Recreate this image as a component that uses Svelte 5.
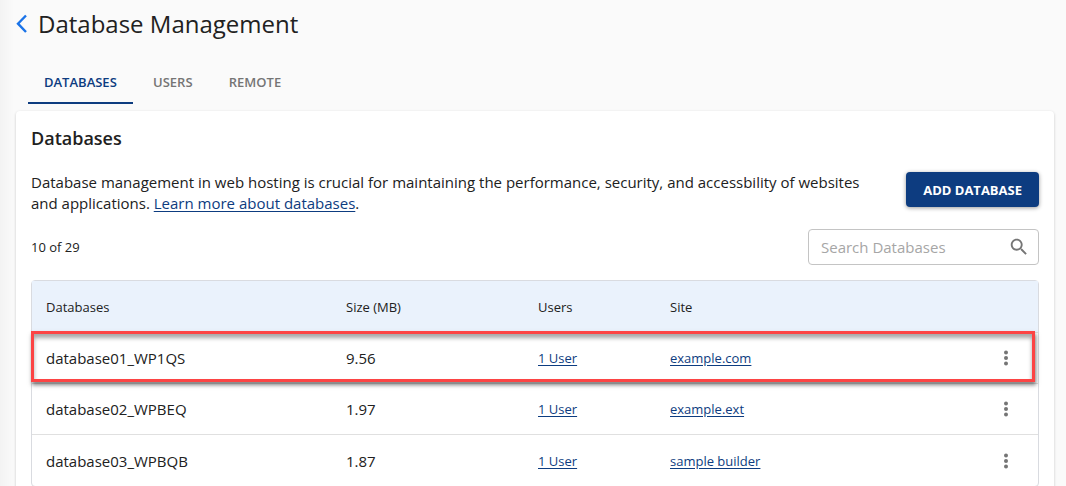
<script lang="ts">
    const tabs = ["Databases", "Users", "Remote"];
    let activeTab = $state("Databases");
    let search = $state("");

    const total = 29;
    const pageSize = 10;

    const databases = [
        { name: "database01_WP1QS", size: "9.56", users: "1 User", site: "example.com" },
        { name: "database02_WPBEQ", size: "1.97", users: "1 User", site: "example.ext" },
        { name: "database03_WPBQB", size: "1.87", users: "1 User", site: "sample builder" },
    ];
    const highlighted = "database01_WP1QS";

    const rows = $derived(
        databases.filter((db) => db.name.toLowerCase().includes(search.toLowerCase()))
    );
</script>

<div class="page">
    <header>
        <a class="back" href="#back" aria-label="Back">
            <svg width="12" height="20" viewBox="0 0 12 20">
                <path d="M10 1.5 L2 9.7 L10 18" fill="none" stroke="currentColor" stroke-width="2.4" />
            </svg>
        </a>
        <h1>Database Management</h1>
    </header>

    <div class="tabs" role="tablist">
        {#each tabs as tab}
            <button
                role="tab"
                class:active={activeTab === tab}
                aria-selected={activeTab === tab}
                onclick={() => (activeTab = tab)}
            >{tab}</button>
        {/each}
    </div>

    <main>
        <h2>Databases</h2>

        <div class="intro">
            <p>
                Database management in web hosting is crucial for maintaining the performance, security, and accessbility of websites and applications. <a href="#learn">Learn more about databases</a>.
            </p>
            <button class="add">Add Database</button>
        </div>

        <div class="toolbar">
            <span class="count">{pageSize} of {total}</span>
            <label class="search">
                <input type="text" placeholder="Search Databases" aria-label="Search Databases" bind:value={search} />
                <svg width="22" height="22" viewBox="0 0 24 24" fill="currentColor">
                    <path d="M15.5 14h-.79l-.28-.27C15.41 12.59 16 11.11 16 9.5 16 5.91 13.09 3 9.5 3S3 5.91 3 9.5 5.91 16 9.5 16c1.61 0 3.09-.59 4.23-1.57l.27.28v.79l5 4.99L20.49 19l-4.99-5zm-6 0C7.01 14 5 11.99 5 9.5S7.01 5 9.5 5 14 7.01 14 9.5 11.99 14 9.5 14z" />
                </svg>
            </label>
        </div>

        <div class="table-wrap">
            <table>
                <thead>
                    <tr>
                        <th class="name">Databases</th>
                        <th class="size">Size (MB)</th>
                        <th class="users">Users</th>
                        <th>Site</th>
                        <th class="actions" aria-label="Actions"></th>
                    </tr>
                </thead>
                <tbody>
                    {#each rows as db (db.name)}
                        <tr class:highlight={db.name === highlighted}>
                            <td>{db.name}</td>
                            <td>{db.size}</td>
                            <td class="link"><a href="#users">{db.users}</a></td>
                            <td class="link"><a href="#site">{db.site}</a></td>
                            <td class="actions">
                                <button aria-label="Actions for {db.name}">
                                    <svg width="20" height="20" viewBox="0 0 20 20" fill="currentColor">
                                        <circle cx="10" cy="4.5" r="2" />
                                        <circle cx="10" cy="10" r="2" />
                                        <circle cx="10" cy="15.5" r="2" />
                                    </svg>
                                </button>
                            </td>
                        </tr>
                    {/each}
                </tbody>
            </table>
        </div>
    </main>
</div>

<style>
    :global(body) {
        background: #fafafa;
        overflow: hidden;
    }

    .page {
        box-sizing: border-box;
        min-height: 100vh;
        padding: 8px 12px 0 16px;
        background: linear-gradient(to right, #f3f3f3, #fafafa 14px);
        color: #212121;
        font-family: "Open Sans", "Liberation Sans", sans-serif;
        font-size: 14px;
    }

    header {
        display: flex;
        align-items: center;
        gap: 10px;
    }

    .back {
        display: flex;
        color: #1a73e8;
    }

    h1 {
        margin: 0;
        font-size: 24px;
        font-weight: 400;
        line-height: 32px;
    }

    button {
        border: none;
        background: none;
        font-family: inherit;
        cursor: pointer;
    }

    .tabs {
        display: flex;
        margin: 22px 0 7px 12px;
    }

    .tabs button {
        min-width: 80px;
        height: 42px;
        padding: 0 16px;
        border-bottom: 2px solid transparent;
        color: #757575;
        font-size: 13px;
        font-weight: 600;
        text-transform: uppercase;
    }

    .tabs .active {
        border-bottom-color: #0d3c80;
        color: #0d3c80;
    }

    main {
        padding: 15px;
        border-radius: 4px;
        background: #fff;
        box-shadow: 0 1px 3px rgba(0, 0, 0, 0.2);
    }

    h2 {
        margin: 0;
        font-size: 18px;
        font-weight: 600;
        line-height: 24px;
    }

    a {
        color: #0d3c80;
        text-underline-offset: 2px;
    }

    .intro {
        display: flex;
        align-items: flex-start;
        justify-content: space-between;
        gap: 40px;
        margin-top: 22px;
    }

    p {
        max-width: 830px;
        margin: 0;
        font-size: 15px;
        line-height: 21px;
    }

    .add {
        flex: none;
        height: 35px;
        padding: 0 17px;
        border-radius: 4px;
        background: #0d3c80;
        box-shadow: 0 1px 4px rgba(0, 0, 0, 0.4);
        color: #fff;
        font-size: 13px;
        font-weight: 700;
        text-transform: uppercase;
    }

    .toolbar {
        display: flex;
        align-items: center;
        justify-content: space-between;
        margin: 15px 0;
    }

    .count {
        font-size: 13px;
    }

    .search {
        box-sizing: border-box;
        display: flex;
        align-items: center;
        width: 231px;
        height: 36px;
        padding: 0 8px 0 12px;
        border: 1px solid #c4c4c4;
        border-radius: 4px;
        color: #757575;
    }

    input {
        flex: 1;
        min-width: 0;
        padding: 0;
        border: none;
        outline: none;
        background: none;
        color: #212121;
        font-family: inherit;
        font-size: 15px;
    }

    input::placeholder {
        color: #a6a6a6;
    }

    .table-wrap {
        border: 1px solid #d9dbe0;
        border-radius: 4px;
    }

    table {
        width: 100%;
        table-layout: fixed;
        border-collapse: separate;
        border-spacing: 0;
    }

    th,
    td {
        box-sizing: border-box;
        height: 51px;
        padding: 0 0 0 14px;
        border-bottom: 1px solid #e0e0e0;
        text-align: left;
    }

    th {
        height: 52px;
        background: #eaf2fc;
        font-size: 13px;
        font-weight: 400;
    }

    td {
        font-size: 15px;
        line-height: 20px;
    }

    .link {
        font-size: 13px;
    }

    tbody tr:last-child td {
        border-bottom: none;
    }

    .name {
        width: 300px;
    }

    .size {
        width: 192px;
    }

    .users {
        width: 132px;
    }

    .actions {
        width: 60px;
        padding: 0 22px 0 0;
    }

    .actions button {
        display: block;
        margin-left: auto;
        padding: 0;
        color: #757575;
    }

    .actions svg {
        display: block;
    }

    .highlight {
        position: relative;
    }

    /* callout frame drawn over the row */
    .highlight td:first-child::after {
        content: "";
        position: absolute;
        inset: -2px 3px 2px -1px;
        border: 3px solid #fc4444;
        box-shadow: 1px 3px 4px rgba(0, 0, 0, 0.5), inset 0 4px 4px rgba(0, 0, 0, 0.35);
        pointer-events: none;
    }
</style>
